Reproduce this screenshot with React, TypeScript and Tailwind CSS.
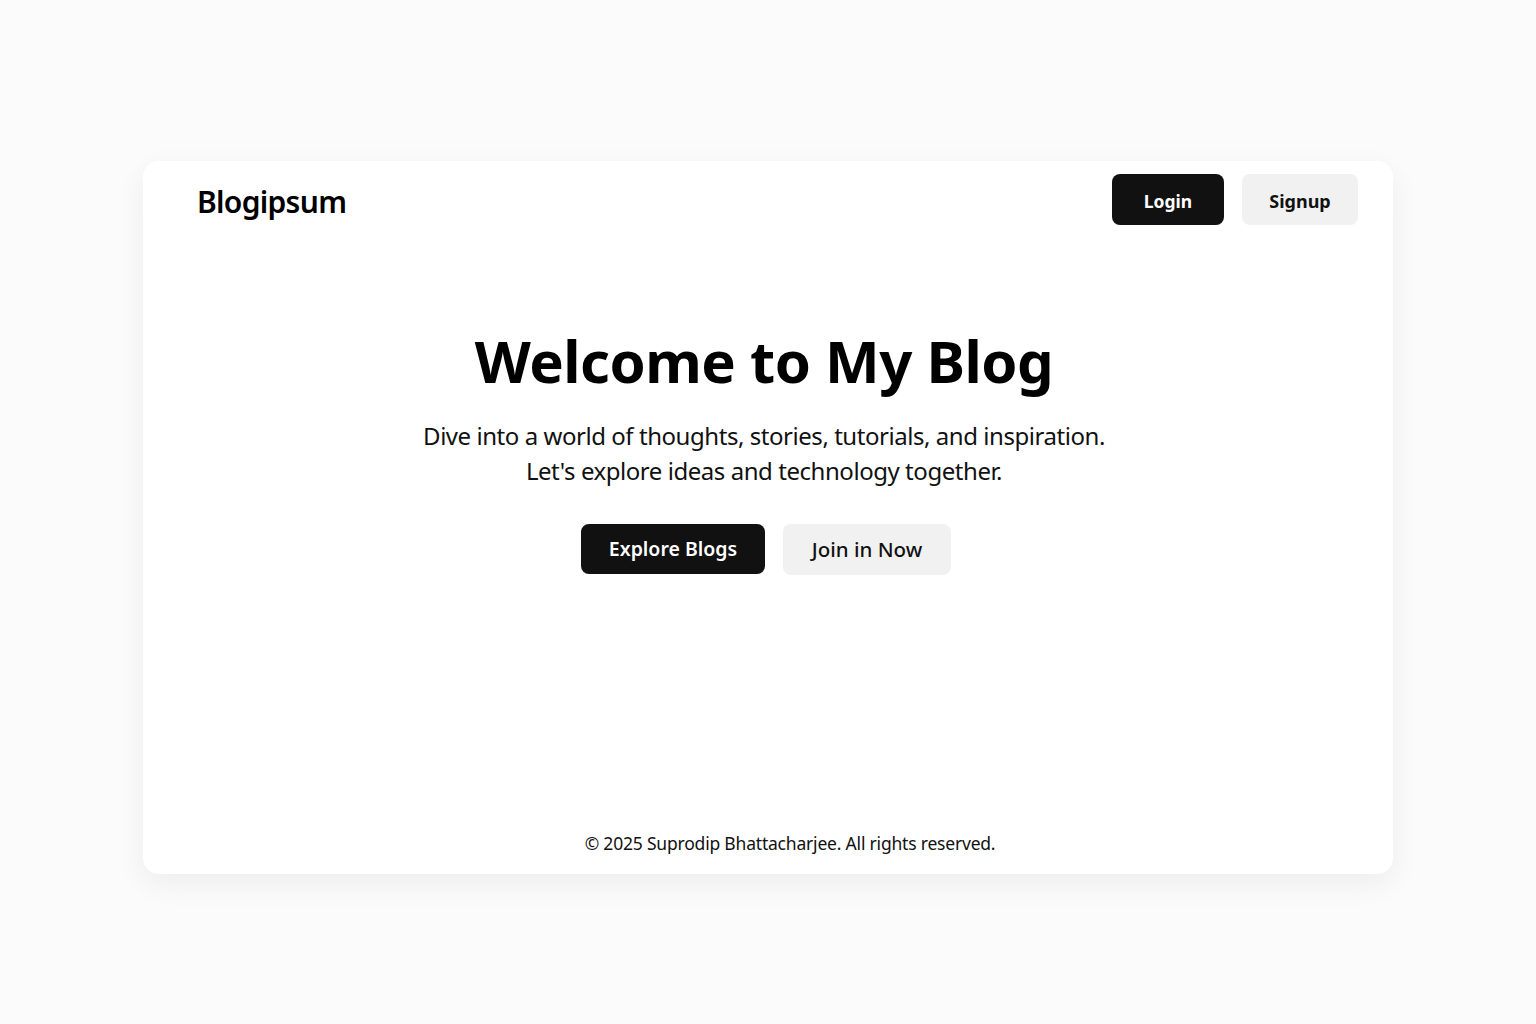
export default function App() {
    return (
        <div className="min-h-screen w-full bg-[#fbfbfb] pt-[161px] pl-[143px]" style={{ fontFamily: '"Noto Sans", "Open Sans", sans-serif' }}>
            <div className="w-[1250px] h-[713px] bg-white rounded-2xl shadow-[0_10px_30px_rgba(0,0,0,0.06)] flex flex-col">
                <header className="flex items-center justify-between pl-[54px] pr-[35px] pt-[13px]">
                    <h1 className="text-[30px] font-semibold text-black tracking-[-0.7px] mt-[4px]">Blogipsum</h1>
                    <div className="flex items-center gap-[18px]">
                        <button className="w-[112px] h-[51px] pt-[3px] rounded-lg bg-[#111111] text-white text-[17.5px] font-bold">Login</button>
                        <button className="w-[116px] h-[51px] pt-[3px] rounded-lg bg-[#f1f1f1] text-[#111] text-[18px] font-bold">Signup</button>
                    </div>
                </header>
                <main className="flex flex-col items-center pt-[101px] pr-[8px]">
                    <h2 className="text-[58px] leading-[70px] font-bold text-black tracking-[-0.5px]">Welcome to My Blog</h2>
                    <p className="mt-[22px] text-[24px] leading-[35px] text-[#111] text-center tracking-[-0.45px]">
                        Dive into a world of thoughts, stories, tutorials, and inspiration.
                        <br />
                        Let's explore ideas and technology together.
                    </p>
                    <div className="mt-[36px] ml-[4px] flex gap-[18px]">
                        <button className="w-[184px] h-[50px] rounded-lg bg-[#111111] text-white text-[19.5px] font-semibold">Explore Blogs</button>
                        <button className="w-[168px] h-[51px] rounded-lg bg-[#f1f1f1] text-[#111] text-[20.5px] font-medium">Join in Now</button>
                    </div>
                </main>
                <footer className="mt-auto pb-[18px] text-center text-[17.5px] text-[#111] pl-[44px] tracking-[-0.2px]">
                    © 2025 Suprodip Bhattacharjee. All rights reserved.
                </footer>
            </div>
        </div>
    )
}
